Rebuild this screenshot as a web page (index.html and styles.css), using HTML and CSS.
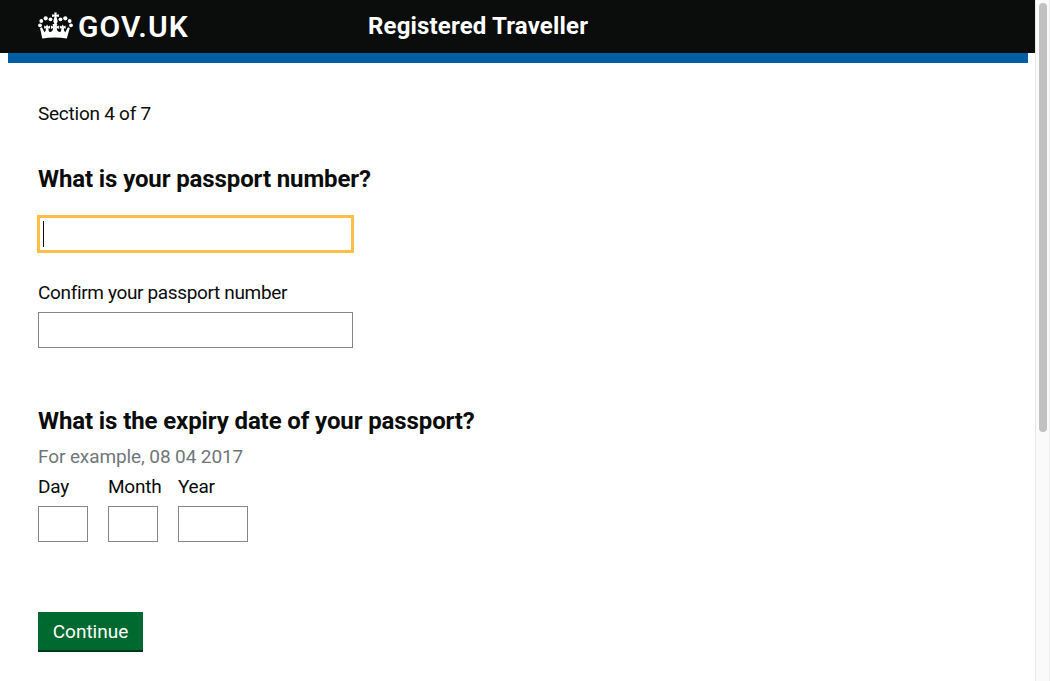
FILE: index.html
```html
<!DOCTYPE html>
<html lang="en">
<head>
<meta charset="utf-8">
<title>Registered Traveller - GOV.UK</title>
<link rel="stylesheet" href="styles.css">
</head>
<body>
<div class="page">
  <header class="header">
    <a class="logo">
      <svg class="crown" viewBox="0.5 0.5 35 27" width="35" height="27" fill="#fff">
        <path d="M16.700 1h2.600l-.4 2.200 2.500-.5v2.800l-2.500-.4.7 2.400.6 2.200-1.200 3h-2l-1.200-3 .6-2.200.7-2.400-2.500.4v-2.800l2.500.5z"/>
        <circle cx="13" cy="7.800" r="1.900"/><circle cx="8.200" cy="6.800" r="2.100"/><circle cx="3.800" cy="9.500" r="1.900"/><circle cx="2.500" cy="13.800" r="1.900"/>
        <circle cx="23" cy="7.800" r="1.900"/><circle cx="27.800" cy="6.800" r="2.100"/><circle cx="32.200" cy="9.500" r="1.900"/><circle cx="33.500" cy="13.800" r="1.900"/>
        <path d="M2.500 16.500l1.900-.7 2.500 5c1.500-1.300 1.900-3.200 1-4.400l-1.400.8.300-3.300 1.600 1 1.200-2 1.200 2 1.700-1v3.300l-1.400-.8c-.4 2.400.2 3.900 1.500 4 1.900.1 3-1.500 2.900-3.900l-2.100 1v-3.600l2.300 1-.7-2.400h4.800l-.7 2.400 2.300-1v3.600l-2.100-1c-.1 2.400 1 4 2.900 3.900 1.300-.1 1.900-1.600 1.500-4l-1.400.8v-3.300l1.700 1 1.200-2 1.200 2 1.600-1 .3 3.300-1.400-.8c-.9 1.200-.5 3.100 1 4.400l2.500-5 1.900.7-3 10.500c-7.500-1.200-16.500-1.200-24.500 0z"/>
      </svg>
      <span class="wordmark">GOV.UK</span>
    </a>
    <span class="service">Registered Traveller</span>
  </header>
  <div class="stripe"></div>
  <main class="content">
    <p class="section">Section 4 of 7</p>
    <h1 class="heading heading-number">What is your passport number?</h1>
    <div class="field focused"><span class="caret"></span></div>
    <label class="label confirm">Confirm your passport number</label>
    <div class="field"></div>
    <h1 class="heading heading-expiry">What is the expiry date of your passport?</h1>
    <p class="hint">For example, 08 04 2017</p>
    <div class="date">
      <div class="part"><label class="label day">Day</label><div class="field"></div></div>
      <div class="part"><label class="label month">Month</label><div class="field"></div></div>
      <div class="part year-part"><label class="label year">Year</label><div class="field"></div></div>
    </div>
    <button class="continue"><span>Continue</span></button>
  </main>
</div>
<div class="scrollbar"><div class="thumb"></div></div>
</body>
</html>
```
FILE: styles.css
```css
* { box-sizing: border-box; }
body {
  margin: 0;
  height: 681px;
  display: flex;
  overflow: hidden;
  background: #fff;
  color: #0b0c0c;
  font: 19px/25px Roboto, "Liberation Sans", sans-serif;
}
p, h1 { margin: 0; }
.page { width: 1035px; }
.header {
  display: flex;
  height: 53px;
  padding-left: 38px;
  background: #0b0c0c;
  color: #fff;
}
.logo { display: flex; width: 330px; }
.crown { margin: 12px 5px 0 0; flex: none; }
.wordmark { font: 600 30px/53px Roboto, "Liberation Sans", sans-serif; letter-spacing: 1.1px; }
.service { font-size: 24px; font-weight: bold; line-height: 52px; letter-spacing: 0.17px; white-space: nowrap; }
.stripe { height: 10px; margin: 0 7px 0 8px; background: #005ea5; }
.content { display: flex; flex-direction: column; padding: 38px 0 0 38px; white-space: nowrap; }
.section { letter-spacing: -0.25px; }
.heading { font-size: 24px; line-height: 30px; font-weight: bold; letter-spacing: -0.11px; }
.heading-number { margin: 38px 0 22px; }
.heading-expiry { margin-top: 58px; }
.field { width: 315px; height: 36px; border: 1px solid #858688; background: #fff; }
.focused { border: 0; outline: 3px solid #ffbf47; outline-offset: -2px; padding: 5px; }
.caret { display: block; width: 1px; height: 26px; background: #0b0c0c; }
.confirm { margin: 28px 0 7px; letter-spacing: -0.35px; }
.hint { color: #6f777b; margin-top: 8px; letter-spacing: -0.1px; }
.date { display: flex; gap: 20px; margin-top: 5px; }
.part { width: 50px; }
.year-part { width: 70px; }
.part .label { display: block; margin-bottom: 7px; letter-spacing: -0.25px; }
.part .field { width: 100%; }
.continue {
  width: 105px;
  height: 40px;
  margin-top: 70px;
  padding: 0 0 2px;
  border: 0;
  box-shadow: inset 0 -2px 0 #003618;
  background: #00692f;
  color: #fff;
  font: inherit;
}
.scrollbar { width: 15px; background: #fafafa; border-left: 1px solid #e7e7e7; border-right: 1px solid #ededed; padding: 3px 2px 0 3px; }
.thumb { width: 8px; height: 429px; border-radius: 4px; background: #c1c1c1; }
```
